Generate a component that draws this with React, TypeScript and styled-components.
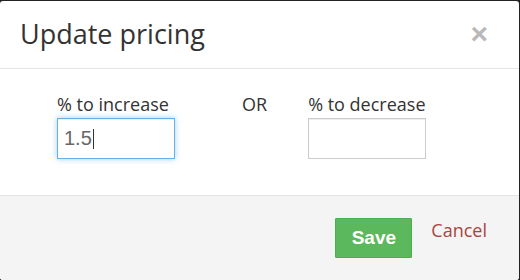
import React from 'react';
import styled, { createGlobalStyle } from 'styled-components';

const GlobalStyle = createGlobalStyle`
  html, body {
    margin: 0;
    padding: 0;
    background: #222222;
    overflow: hidden;
  }
  body {
    font-family: "Open Sans", "Liberation Sans", sans-serif;
    color: #333333;
  }
`;

const Modal = styled.div`
  margin: 1px 1px 0 0;
  height: 279px;
  background: #ffffff;
  border-radius: 3px;
  overflow: hidden;
  display: flex;
  flex-direction: column;
`;

const Header = styled.div`
  display: flex;
  align-items: center;
  justify-content: space-between;
  padding: 17px 31px 18px 20px;
  border-bottom: 1px solid #e5e5e5;
`;

const Title = styled.h4`
  margin: 0;
  font-size: 27px;
  line-height: 32px;
  font-weight: 400;
  color: #333333;
`;

const Close = styled.button`
  border: 0;
  background: none;
  padding: 0;
  margin-top: -1px;
  font-family: "Liberation Sans", Arial, sans-serif;
  font-size: 30px;
  font-weight: 700;
  line-height: 1;
  color: #b9b9b9;
  cursor: pointer;
`;

const Body = styled.div`
  display: flex;
  align-items: flex-start;
  padding: 23px 20px 36px 57px;
  border-bottom: 1px solid #e5e5e5;
`;

const Field = styled.div`
  display: flex;
  flex-direction: column;
  width: 118px;
`;

const Label = styled.label`
  font-size: 18px;
  line-height: 25px;
  margin-bottom: 1px;
  color: #333333;
  white-space: nowrap;
`;

const Or = styled.span`
  font-size: 18px;
  line-height: 25px;
  margin: 0 41px 0 67px;
  color: #333333;
`;

const TextBox = styled.div<{ $focused?: boolean }>`
  box-sizing: border-box;
  height: 41px;
  padding: 0 6px;
  display: flex;
  align-items: center;
  font-family: "Liberation Sans", Arial, sans-serif;
  font-size: 20px;
  color: #666666;
  background: #ffffff;
  border: 1px solid ${(p) => (p.$focused ? '#66afe9' : '#cccccc')};
  box-shadow: ${(p) =>
    p.$focused
      ? 'inset 0 1px 1px rgba(0,0,0,.075), 0 0 6px rgba(102,175,233,.6)'
      : 'inset 0 1px 1px rgba(0,0,0,.075)'};
`;

const Caret = styled.span`
  display: inline-block;
  width: 1px;
  height: 20px;
  margin-left: 1px;
  background: #333333;
`;

const Footer = styled.div`
  flex: 1;
  display: flex;
  justify-content: flex-end;
  align-items: flex-start;
  padding: 22px 32px 0 0;
  background: #f4f4f4;
`;

const SaveButton = styled.button`
  box-sizing: border-box;
  width: 77px;
  height: 40px;
  padding: 0;
  border: 1px solid #4cae4c;
  border-radius: 1px;
  background: #5cb85c;
  color: #ffffff;
  font-family: "Liberation Sans", Arial, sans-serif;
  font-size: 19px;
  font-weight: 700;
  cursor: pointer;
`;

const CancelLink = styled.a`
  margin: 0 0 0 19px;
  font-size: 18px;
  line-height: 25px;
  color: #a94442;
  text-decoration: none;
`;

export default function App() {
  return (
    <>
      <GlobalStyle />
      <Modal>
        <Header>
          <Title>Update pricing</Title>
          <Close aria-label="Close">×</Close>
        </Header>
        <Body>
          <Field>
            <Label>% to increase</Label>
            <TextBox $focused>
              1.5
              <Caret />
            </TextBox>
          </Field>
          <Or>OR</Or>
          <Field>
            <Label>% to decrease</Label>
            <TextBox />
          </Field>
        </Body>
        <Footer>
          <SaveButton>Save</SaveButton>
          <CancelLink href="#">Cancel</CancelLink>
        </Footer>
      </Modal>
    </>
  );
}
